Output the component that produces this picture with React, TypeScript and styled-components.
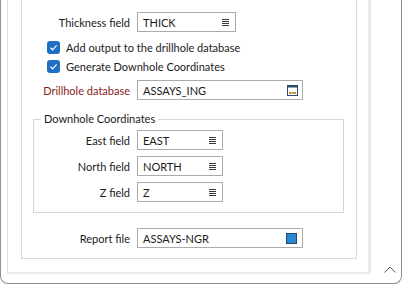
import React from "react";
import styled, {createGlobalStyle} from "styled-components";

const GlobalStyle = createGlobalStyle`
  html, body {
    margin: 0;
    padding: 0;
    background: #ffffff;
  }
  body {
    font-family: Lato, "Liberation Sans", sans-serif;
    font-size: 11px;
    color: #1a1a1a;
  }
`;

const ListIcon = () => (
    <svg width="7" height="7" viewBox="0 0 7 7">
        <rect x="0" y="0" width="7" height="1" fill="#3a3a3a"/>
        <rect x="0" y="2" width="7" height="1" fill="#3a3a3a"/>
        <rect x="0" y="4" width="7" height="1" fill="#3a3a3a"/>
        <rect x="0" y="6" width="7" height="1" fill="#3a3a3a"/>
    </svg>
);

const BrowseIcon = () => (
    <svg width="11" height="11" viewBox="0 0 11 11">
        <rect x="0.5" y="0.5" width="10" height="10" fill="#ffffff" stroke="#2b4a6f"/>
        <rect x="0" y="0" width="11" height="2.5" fill="#2b4a6f"/>
        <rect x="2" y="7" width="2" height="2" fill="#c08a24"/>
        <rect x="4.5" y="7" width="2" height="2" fill="#c08a24"/>
        <rect x="7" y="7" width="2" height="2" fill="#c08a24"/>
    </svg>
);

const FileIcon = () => (
    <svg width="11" height="11" viewBox="0 0 11 11">
        <rect x="0.5" y="0.5" width="10" height="10" fill="#2a88d0" stroke="#254a70"/>
    </svg>
);

const CheckMark = () => (
    <svg width="13" height="13" viewBox="0 0 13 13">
        <polyline points="3.5,6.8 5.6,8.8 9.6,4.4" fill="none" stroke="#ffffff" strokeWidth="1.2"/>
    </svg>
);

const Caret = () => (
    <svg width="12" height="7" viewBox="0 0 12 7">
        <polyline points="0.5,6.5 6,1 11.5,6.5" fill="none" stroke="#5a5a5a" strokeWidth="1"/>
    </svg>
);

const Frame = styled.div`
  width: 402px;
  height: 284px;
  box-sizing: border-box;
  border: 1px solid #8e8e8e;
  border-top: none;
  border-bottom-left-radius: 8px;
  border-bottom-right-radius: 8px;
  display: flex;
  padding: 0 0 9px 6px;
`;

const OuterPanel = styled.div`
  width: 364px;
  box-sizing: border-box;
  border-left: 1px solid #e0e0e0;
  border-right: 3px solid #ebebeb;
  border-bottom: 2px solid #ebebeb;
  padding: 0 11px 14px 13px;
`;

const Gutter = styled.div`
  flex: 1;
  display: flex;
  align-items: flex-end;
  justify-content: flex-end;
  padding: 0 5px 1px 0;
`;

const InnerPanel = styled.div`
  box-sizing: border-box;
  height: 259px;
  border: 1px solid #dadada;
  border-top: none;
  padding-top: 12px;
  display: flex;
  flex-direction: column;
`;

const FieldRow = styled.div<{ $labelWidth: number; $top?: number }>`
  display: grid;
  grid-template-columns: ${p => p.$labelWidth}px auto;
  column-gap: 7px;
  align-items: center;
  margin-top: ${p => p.$top ?? 0}px;
`;

const Label = styled.span<{ $required?: boolean }>`
  text-align: right;
  white-space: nowrap;
  color: ${p => (p.$required ? "#8b1c1c" : "#1a1a1a")};
`;

const Field = styled.div<{ $width: number; $iconGap: number }>`
  width: ${p => p.$width}px;
  height: 20px;
  box-sizing: border-box;
  border: 1px solid #ababab;
  display: flex;
  align-items: center;
  justify-content: space-between;
  padding: 0 ${p => p.$iconGap}px 0 5px;
  background: #ffffff;
`;

const CheckRow = styled.label<{ $top: number }>`
  display: flex;
  align-items: center;
  gap: 6px;
  height: 19px;
  margin: ${p => p.$top}px 0 0 25px;
`;

const CheckBox = styled.span`
  width: 13px;
  height: 13px;
  border-radius: 3px;
  background: #1d6fc4;
  display: flex;
`;

const Group = styled.fieldset`
  margin: 12px 0 0 11px;
  width: 311px;
  box-sizing: border-box;
  border: 1px solid #d6d6d6;
  padding: 4px 0 10px 0;
  display: flex;
  flex-direction: column;
  gap: 6px;
`;

const GroupTitle = styled.legend`
  margin-left: 7px;
  padding: 0 3px;
  line-height: 14px;
`;

export default function App() {
    return (
        <>
            <GlobalStyle/>
            <Frame>
                <OuterPanel>
                    <InnerPanel>
                        <FieldRow $labelWidth={108}>
                            <Label>Thickness field</Label>
                            <Field $width={99} $iconGap={6}>THICK<ListIcon/></Field>
                        </FieldRow>
                        <CheckRow $top={6}>
                            <CheckBox><CheckMark/></CheckBox>
                            Add output to the drillhole database
                        </CheckRow>
                        <CheckRow $top={0}>
                            <CheckBox><CheckMark/></CheckBox>
                            Generate Downhole Coordinates
                        </CheckRow>
                        <FieldRow $labelWidth={108} $top={4}>
                            <Label $required>Drillhole database</Label>
                            <Field $width={166} $iconGap={4}>ASSAYS_ING<BrowseIcon/></Field>
                        </FieldRow>
                        <Group>
                            <GroupTitle>Downhole Coordinates</GroupTitle>
                            <FieldRow $labelWidth={96}>
                                <Label>East field</Label>
                                <Field $width={86} $iconGap={6}>EAST<ListIcon/></Field>
                            </FieldRow>
                            <FieldRow $labelWidth={96}>
                                <Label>North field</Label>
                                <Field $width={86} $iconGap={6}>NORTH<ListIcon/></Field>
                            </FieldRow>
                            <FieldRow $labelWidth={96}>
                                <Label>Z field</Label>
                                <Field $width={86} $iconGap={6}>Z<ListIcon/></Field>
                            </FieldRow>
                        </Group>
                        <FieldRow $labelWidth={108} $top={15}>
                            <Label>Report file</Label>
                            <Field $width={166} $iconGap={5}>ASSAYS-NGR<FileIcon/></Field>
                        </FieldRow>
                    </InnerPanel>
                </OuterPanel>
                <Gutter>
                    <Caret/>
                </Gutter>
            </Frame>
        </>
    );
}
